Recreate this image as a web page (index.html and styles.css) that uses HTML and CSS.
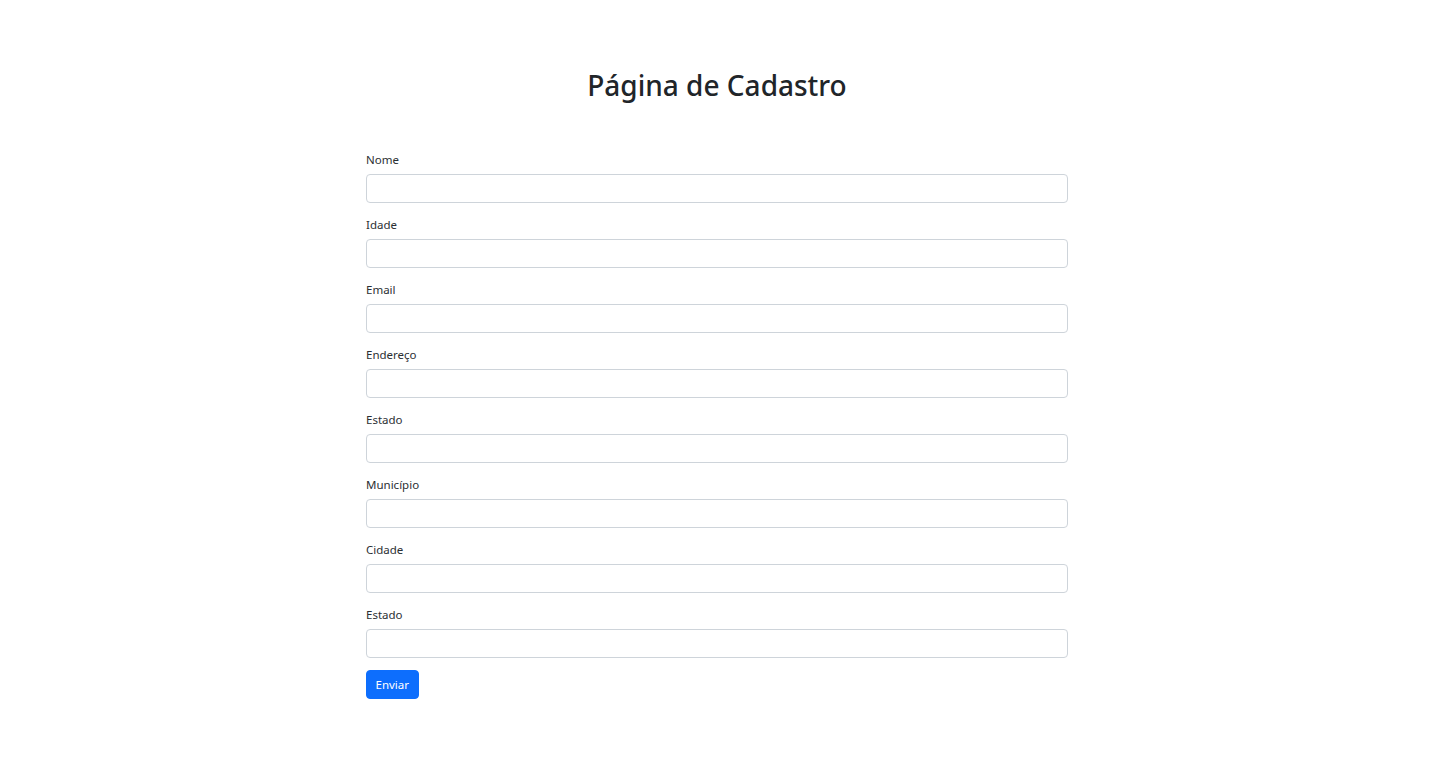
FILE: index.html
```html
<!DOCTYPE html>
<html lang="pt-BR">
<head>
<meta charset="utf-8">
<title>Página de Cadastro</title>
<link rel="stylesheet" href="styles.css">
</head>
<body>
<main class="container">
  <h1 class="title">Página de Cadastro</h1>
  <form class="form">
    <div class="field"><label class="label" for="nome">Nome</label><input class="input" id="nome" type="text"></div>
    <div class="field"><label class="label" for="idade">Idade</label><input class="input" id="idade" type="text"></div>
    <div class="field"><label class="label" for="email">Email</label><input class="input" id="email" type="text"></div>
    <div class="field"><label class="label" for="endereco">Endereço</label><input class="input" id="endereco" type="text"></div>
    <div class="field"><label class="label" for="estado">Estado</label><input class="input" id="estado" type="text"></div>
    <div class="field"><label class="label" for="municipio">Município</label><input class="input" id="municipio" type="text"></div>
    <div class="field"><label class="label" for="cidade">Cidade</label><input class="input" id="cidade" type="text"></div>
    <div class="field field-last"><label class="label" for="estado2">Estado</label><input class="input" id="estado2" type="text"></div>
    <button class="btn" type="submit">Enviar</button>
  </form>
</main>
</body>
</html>
```
FILE: styles.css
```css
* { box-sizing: border-box; }
html, body { margin: 0; padding: 0; background: #fff; }
body {
  font-family: "Noto Sans", "Open Sans", sans-serif;
  color: #212529;
  font-size: 12px;
  line-height: 1.5;
}
.container {
  width: 705px;
  margin: 0 auto;
  padding: 67px 3px 0 0;
}
.title {
  margin: 0 0 48px;
  text-align: center;
  font-size: 28px;
  font-weight: 500;
  line-height: 36px;
}
.form { display: flex; flex-direction: column; }
.field { display: flex; flex-direction: column; margin-bottom: 13px; }
.field-last { margin-bottom: 12px; }
.label { font-size: 11.5px; line-height: 18px; margin-bottom: 5px; color: #2b2f33; }
.input {
  display: block;
  width: 100%;
  height: 29px;
  border: 1px solid #ced4da;
  border-radius: 4px;
  background: #fff;
  font: inherit;
  padding: 4px 9px;
  outline: none;
}
.btn {
  align-self: flex-start;
  height: 29px;
  padding: 0 8.5px;
  border: 1px solid #0d6efd;
  border-radius: 4px;
  background: #0d6efd;
  color: #fff;
  font: inherit;
  font-size: 11.5px;
  cursor: pointer;
}
```
